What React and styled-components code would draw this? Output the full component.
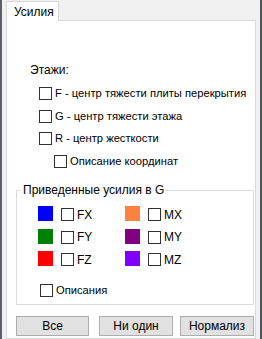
import React from "react";
import styled, { createGlobalStyle } from "styled-components";

const Global = createGlobalStyle`
  html, body { margin: 0; padding: 0; background: #f0f0f0; }
  body { font-family: "Liberation Sans", Arial, sans-serif; font-size: 11.2px; color: #000; }
`;

const Window = styled.div`
  width: 262px;
  height: 339px;
  display: flex;
  overflow: hidden;
  background: #f0f0f0;
`;

const Edge = styled.div`
  width: 2px;
  flex: none;
  background: ${(p) => p.$color};
`;

const Main = styled.div`
  flex: 1;
  display: flex;
  flex-direction: column;
  padding: 1px 4px 0 4px;
  min-width: 0;
`;

const TabStrip = styled.div`
  display: flex;
  height: 19px;
  position: relative;
  z-index: 1;
`;

const Tab = styled.div`
  width: 53px;
  height: 20px;
  box-sizing: border-box;
  background: #fff;
  border: 1px solid #d9d9d9;
  border-bottom: none;
  padding: 3px 0 0 7px;
  line-height: 14px;
  font-size: 12px;
`;

const Panel = styled.div`
  flex: 1;
  background: #fff;
  border: 1px solid #d9d9d9;
  padding: 42px 1px 0 9px;
  display: flex;
  flex-direction: column;
`;

const Heading = styled.div`
  height: 15px;
  line-height: 15px;
  margin-left: 14px;
  font-size: 12px;
`;

const Row = styled.label`
  display: flex;
  align-items: center;
  gap: 3px;
  height: 13px;
  margin-top: ${(p) => p.$mt}px;
  margin-left: ${(p) => p.$indent}px;
  line-height: 13px;
  white-space: nowrap;
`;

const Box = styled.span`
  width: 13px;
  height: 13px;
  box-sizing: border-box;
  border: 1px solid #333;
  background: #fff;
  flex: none;
`;

const Group = styled.div`
  position: relative;
  margin-top: 22px;
  width: 238px;
  height: 115px;
  box-sizing: border-box;
  border: 1px solid #dcdcdc;
  padding: 15px 0 0 21px;
`;

const GroupTitle = styled.span`
  position: absolute;
  top: -8px;
  left: 4px;
  padding: 0 1px 0 2px;
  background: #fff;
  line-height: 15px;
  font-size: 12px;
`;

const ColorGrid = styled.div`
  display: grid;
  grid-template-columns: 87px 87px;
  grid-auto-rows: 15px;
  row-gap: 7.5px;
`;

const Cell = styled.div`
  display: flex;
  align-items: center;
`;

const Swatch = styled.span`
  width: 15px;
  height: 15px;
  flex: none;
  background: ${(p) => p.$color};
  margin-right: 8px;
`;

const CellCheck = styled.span`
  display: flex;
  align-items: center;
  gap: 3px;
  margin-top: 2px;
  font-size: 12px;
`;

const Buttons = styled.div`
  display: flex;
  margin-top: 11px;
`;

const Button = styled.button`
  width: ${(p) => p.$w}px;
  height: 20px;
  margin-left: ${(p) => p.$ml}px;
  box-sizing: border-box;
  border: 1px solid #adadad;
  background: #e1e1e1;
  font: inherit;
  font-size: 12px;
  color: #000;
  padding: 0;
  line-height: 18px;
`;

const forces = [
  ["#0000ff", "FX", "#ff8040", "MX"],
  ["#008000", "FY", "#800080", "MY"],
  ["#ff0000", "FZ", "#8000ff", "MZ"],
];

export default function App() {
  return (
    <>
      <Global />
      <Window>
        <Edge $color="#5b6068" />
        <Main>
          <TabStrip>
            <Tab>Усилия</Tab>
          </TabStrip>
          <Panel>
            <Heading>Этажи:</Heading>
            <Row $mt={9} $indent={23}><Box />F - центр тяжести плиты перекрытия</Row>
            <Row $mt={10} $indent={23}><Box />G - центр тяжести этажа</Row>
            <Row $mt={9} $indent={23}><Box />R - центр жесткости</Row>
            <Row $mt={10} $indent={38}><Box />Описание координат</Row>
            <Group>
              <GroupTitle>Приведенные усилия в G</GroupTitle>
              <ColorGrid>
                {forces.map(([c1, l1, c2, l2]) => (
                  <React.Fragment key={l1}>
                    <Cell>
                      <Swatch $color={c1} />
                      <CellCheck><Box />{l1}</CellCheck>
                    </Cell>
                    <Cell>
                      <Swatch $color={c2} />
                      <CellCheck><Box />{l2}</CellCheck>
                    </Cell>
                  </React.Fragment>
                ))}
              </ColorGrid>
              <Row $mt={18} $indent={2}><Box />Описания</Row>
            </Group>
            <Buttons>
              <Button $w={73} $ml={0}>Все</Button>
              <Button $w={74} $ml={10}>Ни один</Button>
              <Button $w={74} $ml={7}>Нормализ</Button>
            </Buttons>
          </Panel>
        </Main>
        <Edge $color="#4a5461" />
      </Window>
    </>
  );
}
